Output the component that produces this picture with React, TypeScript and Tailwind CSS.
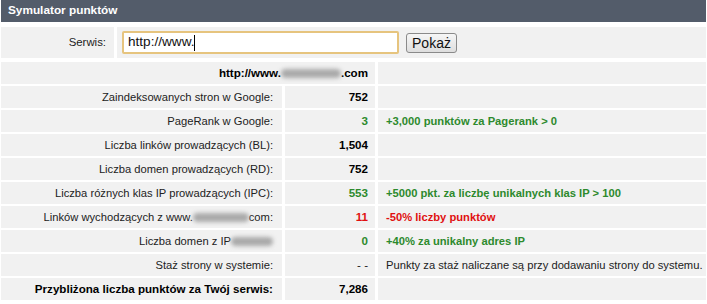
const Blur = ({ w }: { w: number }) => (
  <span
    className="inline-block h-[9px] bg-[#a9a9a9] rounded-full blur-[2px] align-middle"
    style={{ width: w }}
  />
);

type Row = {
  label: React.ReactNode;
  value: React.ReactNode;
  valueClass?: string;
  note?: React.ReactNode;
  noteClass?: string;
  bold?: boolean;
};

const rows: Row[] = [
  { label: "Zaindeksowanych stron w Google:", value: "752", valueClass: "font-bold text-black" },
  {
    label: "PageRank w Google:",
    value: "3",
    valueClass: "font-bold text-[#2d8a2d]",
    note: "+3,000 punktów za Pagerank > 0",
    noteClass: "font-bold text-[#2d8a2d]",
  },
  { label: "Liczba linków prowadzących (BL):", value: "1,504", valueClass: "font-bold text-black" },
  { label: "Liczba domen prowadzących (RD):", value: "752", valueClass: "font-bold text-black" },
  {
    label: "Liczba różnych klas IP prowadzących (IPC):",
    value: "553",
    valueClass: "font-bold text-[#2d8a2d]",
    note: "+5000 pkt. za liczbę unikalnych klas IP > 100",
    noteClass: "font-bold text-[#2d8a2d]",
  },
  {
    label: (
      <>
        Linków wychodzących z www.<Blur w={56} /> com:
      </>
    ),
    value: "11",
    valueClass: "font-bold text-[#e01010]",
    note: "-50% liczby punktów",
    noteClass: "font-bold text-[#e01010]",
  },
  {
    label: (
      <>
        Liczba domen z IP <Blur w={42} />
      </>
    ),
    value: "0",
    valueClass: "font-bold text-[#2d8a2d]",
    note: "+40% za unikalny adres IP",
    noteClass: "font-bold text-[#2d8a2d]",
  },
  {
    label: "Staż strony w systemie:",
    value: "- -",
    valueClass: "text-[#222]",
    note: "Punkty za staż naliczane są przy dodawaniu strony do systemu.",
    noteClass: "text-[#222]",
  },
  {
    label: "Przybliżona liczba punktów za Twój serwis:",
    value: "7,286",
    valueClass: "font-bold text-black",
    bold: true,
  },
];

export default function App() {
  return (
    <div className="w-[707px] h-[304px] bg-white overflow-hidden pl-px pr-px text-[11.2px] text-[#222] font-['Liberation_Sans',Arial,sans-serif]">
      <div className="h-[22px] bg-[#535c6a] flex items-center pl-[7px] text-white font-bold text-[11.8px]">
        Symulator punktów
      </div>

      <div className="mt-[5px] flex gap-[3px] h-[31px]">
        <div className="w-[113px] bg-[#f1f1f1] flex items-center justify-end pr-[8px] text-[11.4px]">
          Serwis:
        </div>
        <div className="flex-1 bg-[#f1f1f1] flex items-center pl-[5px] gap-[7px]">
          <div className="w-[277px] h-[23px] border-2 border-[#e6c47e] rounded-[2px] bg-white flex items-center pl-[4px] text-[13.6px] text-[#111]">
            http://www.<span className="inline-block w-px h-[16px] bg-black" />
          </div>
          <button className="w-[51px] h-[20px] border border-[#8a8a8a] rounded-[3px] bg-gradient-to-b from-[#f6f6f6] to-[#dedede] text-[14px] text-[#111] leading-none">
            Pokaż
          </button>
        </div>
      </div>

      <div className="mt-[4px] grid grid-cols-[281px_90px_1fr] gap-x-[3px] gap-y-[2px] auto-rows-[22px]">
        <div className="col-span-2 bg-[#f1f1f1] flex items-center justify-end pr-[7px] font-bold text-black text-[11.6px]">
          http://www.<Blur w={60} />.com
        </div>
        <div className="bg-[#f1f1f1]" />
        {rows.map((r, i) => (
          <div key={i} className="contents">
            <div
              className={`bg-[#f1f1f1] flex items-center justify-end pr-[9px] whitespace-nowrap ${
                r.bold ? "font-bold text-black text-[11.6px]" : ""
              }`}
            >
              {r.label}
            </div>
            <div className={`bg-[#f1f1f1] flex items-center justify-end pr-[7px] text-[11.6px] ${r.valueClass ?? ""}`}>
              {r.value}
            </div>
            <div className={`bg-[#f1f1f1] flex items-center pl-[8px] whitespace-nowrap ${r.noteClass ?? ""}`}>
              {r.note}
            </div>
          </div>
        ))}
      </div>
    </div>
  );
}
